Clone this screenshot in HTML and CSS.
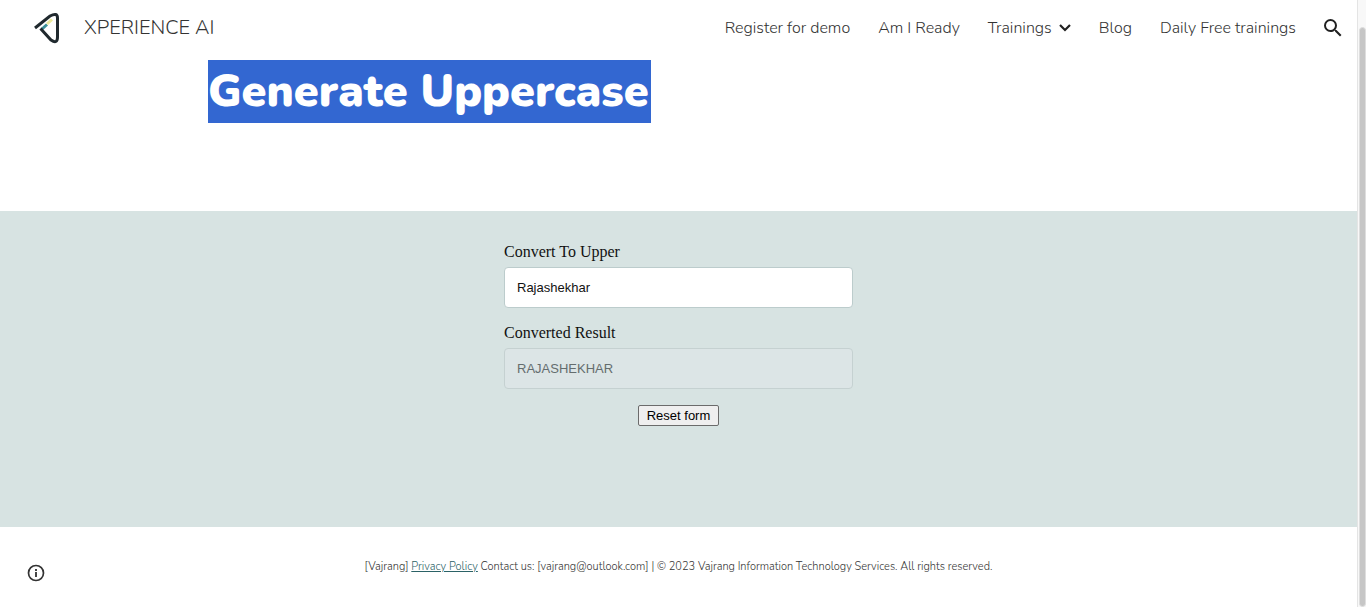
FILE: index.html
```html
<!DOCTYPE html>
<html lang="en">
<head>
<meta charset="utf-8">
<meta name="viewport" content="width=device-width, initial-scale=1">
<title>Generate Uppercase</title>
<link rel="stylesheet" href="styles.css">
</head>
<body>
<div class="page">
  <header class="header">
    <a class="brand" href="#">
      <svg class="logo" viewBox="0 0 34 40" aria-hidden="true">
        <path d="M12 21 L17 16.500" fill="none" stroke="#3d8f96" stroke-width="3"/>
        <path d="M17 16 L22 11.500" fill="none" stroke="#ece99a" stroke-width="3"/>
        <path d="M5 20 L20 8 Q27.500 4 27.500 10 V29 Q27.500 36.500 21 32 L10.500 20.500" fill="none" stroke="#20292e" stroke-width="3"/>
      </svg>
      <span class="brand-name">XPERIENCE AI</span>
    </a>
    <nav class="nav">
      <a class="nav-link" href="#">Register for demo</a>
      <a class="nav-link" href="#">Am I Ready</a>
      <a class="nav-link" href="#">Trainings
        <svg class="chevron" viewBox="0 0 12 8" aria-hidden="true"><path d="M1 1 L6 6 L11 1" fill="none" stroke="#212121" stroke-width="2.200"/></svg>
      </a>
      <a class="nav-link" href="#">Blog</a>
      <a class="nav-link" href="#">Daily Free trainings</a>
      <button class="icon-button" type="button" aria-label="Search">
        <svg class="search-icon" viewBox="3 3 18 18" aria-hidden="true"><path fill="#212121" d="M15.5 14h-.79l-.28-.27A6.47 6.47 0 0 0 16 9.5 6.5 6.5 0 1 0 9.500 16c1.610 0 3.090-.59 4.230-1.570l.27.28v.79l5 4.990L20.490 19l-4.990-5zm-6 0a4.500 4.500 0 1 1 0-9 4.500 4.500 0 0 1 0 9z"/></svg>
      </button>
    </nav>
  </header>
  <main class="main">
    <section class="hero">
      <h1 class="title"><span class="selected">Generate Uppercase</span></h1>
    </section>
    <section class="panel">
      <form class="form">
        <label class="label" for="source">Convert To Upper</label>
        <input class="field" id="source" type="text" value="Rajashekhar">
        <label class="label" for="result">Converted Result</label>
        <input class="field" id="result" type="text" value="RAJASHEKHAR" disabled>
        <button class="reset" type="reset">Reset form</button>
      </form>
    </section>
  </main>
  <footer class="footer">
    <button class="icon-button info" type="button" aria-label="Site information">
      <svg class="info-icon" viewBox="0 0 18 18" aria-hidden="true"><circle cx="9" cy="9" r="7.500" fill="none" stroke="#333" stroke-width="1.700"/><path d="M9 5v2M9 8v5" stroke="#333" stroke-width="1.800"/></svg>
    </button>
    <p class="legal">[Vajrang] <a class="policy" href="#">Privacy Policy</a> Contact us: [vajrang@outlook.com] | © 2023 Vajrang Information Technology Services. All rights reserved.</p>
  </footer>
</div>
<div class="scrollbar" aria-hidden="true"><div class="thumb"></div></div>
</body>
</html>
```

FILE: styles.css
```css
* { box-sizing: border-box; }

body {
  margin: 0;
  min-height: 100vh;
  display: flex;
  background: #fff;
  color: #212121;
  font-family: Nunito, Lato, sans-serif;
}

.page {
  flex: 1;
  display: flex;
  flex-direction: column;
}

.header {
  display: flex;
  align-items: center;
  justify-content: space-between;
  height: 56px;
  padding: 0 15px 0 30px;
}

.brand {
  display: flex;
  align-items: center;
  gap: 20px;
  color: #333;
  text-decoration: none;
}

.logo { width: 34px; height: 40px; }

.brand-name {
  padding-bottom: 2px;
  font-size: 20px;
  font-weight: 300;
}

.nav {
  display: flex;
  align-items: center;
  gap: 28px;
}

.nav-link {
  display: flex;
  align-items: center;
  gap: 7px;
  color: #333;
  font-size: 16px;
  font-weight: 300;
  text-decoration: none;
  white-space: nowrap;
}

.chevron { width: 12px; height: 8px; }

.icon-button {
  display: flex;
  padding: 0;
  border: 0;
  background: none;
}

.search-icon { width: 18px; height: 18px; }

.hero {
  padding: 4px 208px 88px;
}

.title {
  margin: 0;
  font-size: 45px;
  font-weight: 900;
  line-height: 63px;
}

.selected {
  display: inline-block;
  padding-right: 2px;
  background: #3367d1;
  color: #fff;
}

.panel {
  padding: 30px 16px 101px;
  background: #d7e3e2;
}

.form {
  display: flex;
  flex-direction: column;
  max-width: 349px;
  margin: 0 auto;
}

.label {
  margin-bottom: 4px;
  color: #111;
  font-family: "Liberation Serif", serif;
  font-size: 16px;
  line-height: 22px;
}

.field {
  width: 100%;
  height: 41px;
  margin-bottom: 14px;
  padding: 0 12px;
  border: 1px solid #bccccc;
  border-radius: 4px;
  background: #fff;
  color: #111;
  font-family: "Liberation Sans", sans-serif;
  font-size: 13px;
}

.field:disabled {
  border-color: #c5d1d1;
  background: #dce5e6;
  color: #646d6e;
}

.reset {
  align-self: center;
  margin-top: 2px;
  height: 21px;
  padding: 0 8px;
  border: 1px solid #6b6b6b;
  border-radius: 2px;
  background: #efefef;
  color: #000;
  font-family: "Liberation Sans", sans-serif;
  font-size: 13px;
}

.footer {
  flex: 1;
  display: grid;
  grid-template-columns: 48px 1fr 48px;
  padding: 31px 0 24px;
}

.info {
  align-self: end;
  justify-self: end;
  margin: 0 3px 1px 0;
}

.info-icon { width: 18px; height: 18px; }

.legal {
  margin: 0;
  color: #333;
  font-size: 11px;
  font-weight: 300;
  line-height: 18px;
  text-align: center;
}

.policy { color: #2b6266; }

.scrollbar {
  width: 9px;
  padding: 27px 0 0 1px;
  border-left: 1px solid #e4e4e4;
  background: #f8f8f8;
  display: flex;
}

.thumb {
  flex: 1;
  border-radius: 4px;
  border: 1px solid #dedede;
  background: #c6c6c6;
}
```
